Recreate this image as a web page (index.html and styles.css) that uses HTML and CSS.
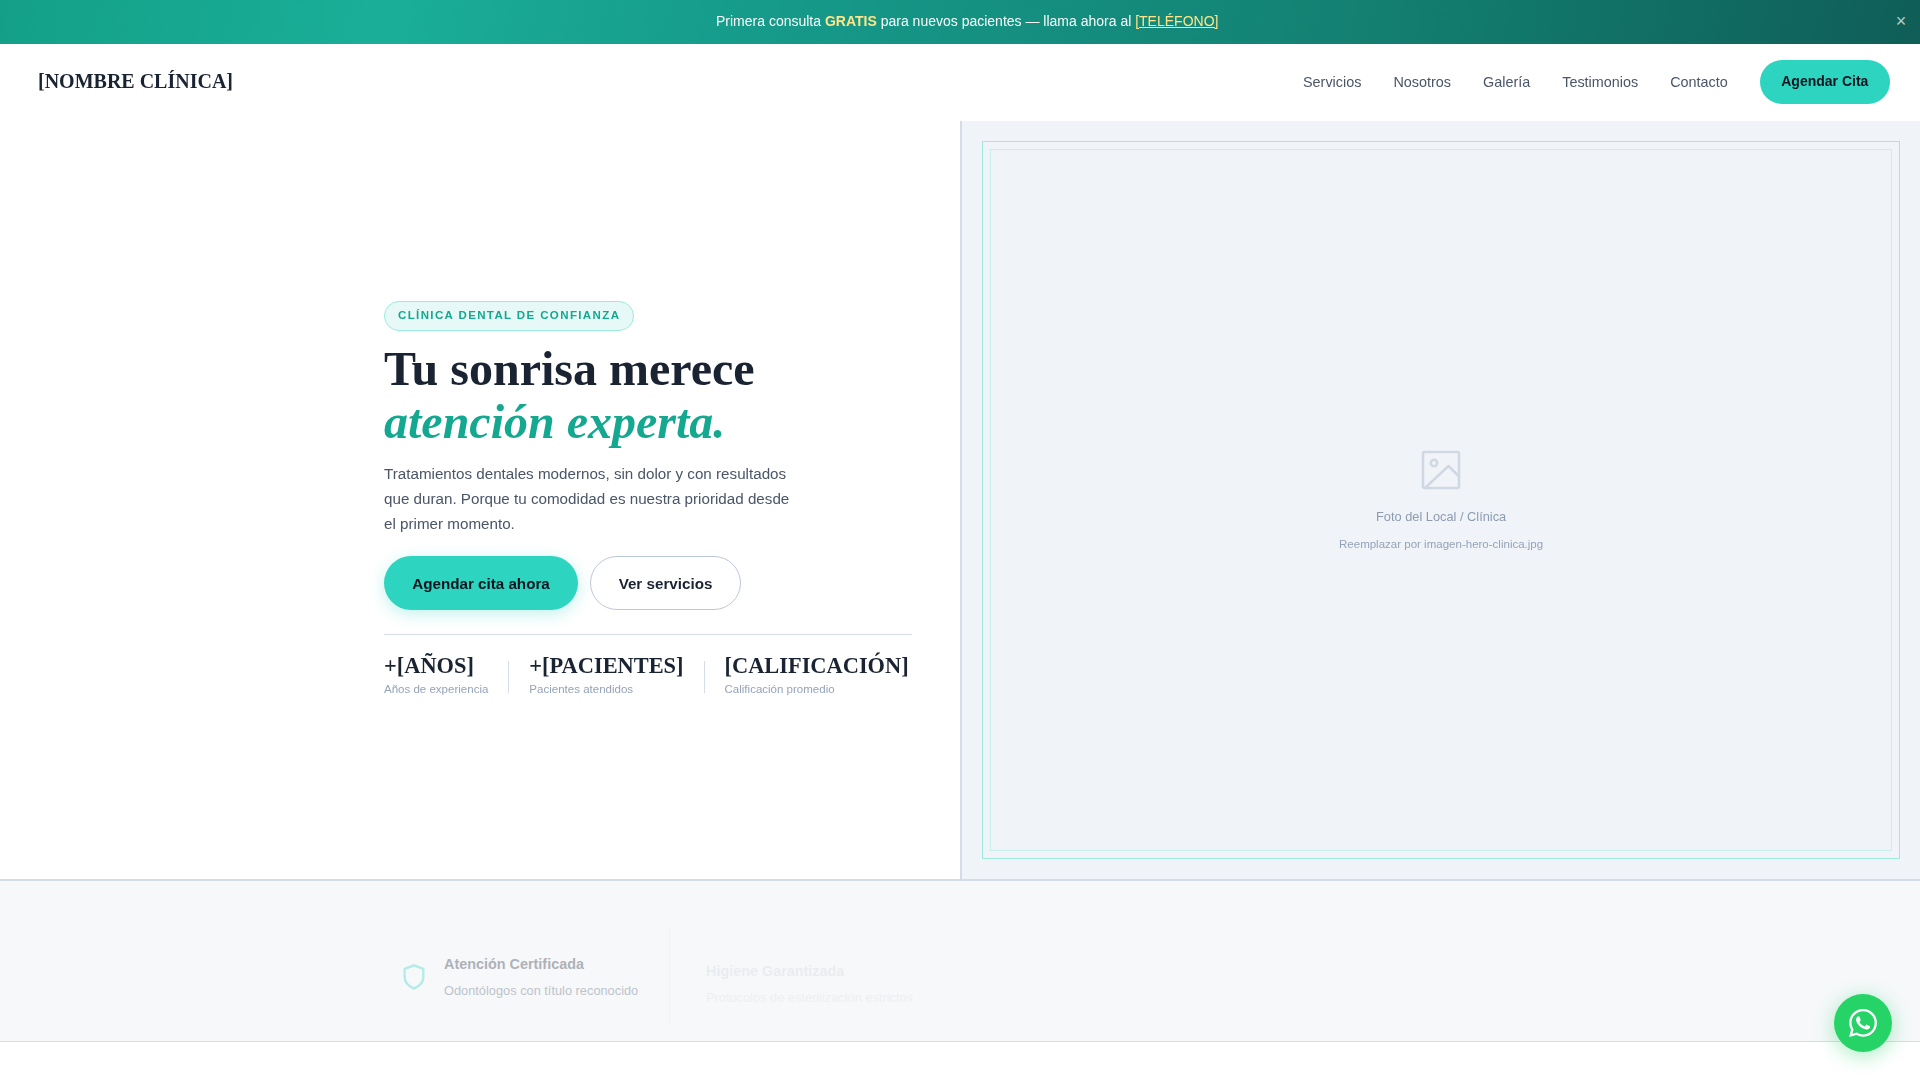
FILE: index.html
```html
<!DOCTYPE html>
<html lang="es">
<head>
<meta charset="utf-8">
<title>Clínica Dental</title>
<link rel="stylesheet" href="styles.css">
</head>
<body>
<div class="topbar">
  <p class="topbar-text soft">Primera consulta <strong>GRATIS</strong> para nuevos pacientes — llama ahora al <a href="#">[TELÉFONO]</a></p>
  <button class="topbar-close">×</button>
</div>
<header class="nav">
  <div class="logo soft">[NOMBRE CLÍNICA]</div>
  <nav class="nav-links soft">
    <a href="#">Servicios</a>
    <a href="#">Nosotros</a>
    <a href="#">Galería</a>
    <a href="#">Testimonios</a>
    <a href="#">Contacto</a>
    <a href="#" class="nav-cta">Agendar Cita</a>
  </nav>
</header>
<section class="hero">
  <div class="hero-left">
    <div class="hero-content soft">
      <span class="badge">CLÍNICA DENTAL DE CONFIANZA</span>
      <h1>Tu sonrisa merece <em>atención experta.</em></h1>
      <p class="lead">Tratamientos dentales modernos, sin dolor y con resultados que duran. Porque tu comodidad es nuestra prioridad desde el primer momento.</p>
      <div class="actions">
        <a href="#" class="btn btn-primary">Agendar cita ahora</a>
        <a href="#" class="btn btn-ghost">Ver servicios</a>
      </div>
      <div class="stats">
        <div class="stat"><strong>+[AÑOS]</strong><span>Años de experiencia</span></div>
        <div class="stat-div"></div>
        <div class="stat"><strong>+[PACIENTES]</strong><span>Pacientes atendidos</span></div>
        <div class="stat-div"></div>
        <div class="stat"><strong>[CALIFICACIÓN]</strong><span>Calificación promedio</span></div>
      </div>
    </div>
  </div>
  <div class="hero-right">
    <div class="frame"><div class="frame-inner">
      <div class="ph soft">
        <svg class="ph-icon" viewBox="0 0 40 40" fill="none" stroke="#d0d9e3" stroke-width="2.6" stroke-linejoin="round" stroke-linecap="round">
          <rect x="2" y="2" width="36" height="36" rx="1.5"/>
          <circle cx="13" cy="13" r="3.2"/>
          <path d="M4 38 L27.5 16 L38 26.5"/>
        </svg>
        <p class="ph-title">Foto del Local / Clínica</p>
        <p class="ph-sub">Reemplazar por imagen-hero-clinica.jpg</p>
      </div>
    </div></div>
  </div>
</section>
<section class="trust">
  <div class="trust-grid">
    <div class="trust-item first">
      <svg class="trust-icon" viewBox="0 0 24 24" fill="none" stroke="#2dd4bf" stroke-width="2" stroke-linejoin="round"><path d="M12 2 L20 5 V12 C20 16.5 16.5 20 12 22 C7.5 20 4 16.5 4 12 V5 Z"/></svg>
      <div><h3>Atención Certificada</h3><p>Odontólogos con título reconocido</p></div>
    </div>
    <div class="trust-item second">
      <div><h3>Higiene Garantizada</h3><p>Protocolos de esterilización estrictos</p></div>
    </div>
  </div>
</section>
<a href="#" class="wa" aria-label="WhatsApp">
  <svg viewBox="0 0 24 24" fill="#fff"><path d="M17.472 14.382c-.297-.149-1.758-.867-2.03-.967-.273-.099-.471-.148-.67.15-.197.297-.767.966-.94 1.164-.173.199-.347.223-.644.075-.297-.15-1.255-.463-2.39-1.475-.883-.788-1.48-1.761-1.653-2.059-.173-.297-.018-.458.13-.606.134-.133.298-.347.446-.52.149-.174.198-.298.298-.497.099-.198.05-.371-.025-.52-.075-.149-.669-1.612-.916-2.207-.242-.579-.487-.5-.669-.51-.173-.008-.371-.01-.57-.01-.198 0-.52.074-.792.372-.272.297-1.04 1.016-1.04 2.479 0 1.462 1.065 2.875 1.213 3.074.149.198 2.096 3.2 5.077 4.487.709.306 1.262.489 1.694.625.712.227 1.36.195 1.871.118.571-.085 1.758-.719 2.006-1.413.248-.694.248-1.289.173-1.413-.074-.124-.272-.198-.57-.347m-5.421 7.403h-.004a9.87 9.87 0 01-5.031-1.378l-.361-.214-3.741.982.998-3.648-.235-.374a9.86 9.86 0 01-1.51-5.26c.001-5.45 4.436-9.884 9.888-9.884 2.64 0 5.122 1.03 6.988 2.898a9.825 9.825 0 012.893 6.994c-.003 5.45-4.437 9.884-9.885 9.884m8.413-18.297A11.815 11.815 0 0012.05 0C5.495 0 .16 5.335.157 11.892c0 2.096.547 4.142 1.588 5.945L.057 24l6.305-1.654a11.882 11.882 0 005.683 1.448h.005c6.554 0 11.89-5.335 11.893-11.893a11.821 11.821 0 00-3.48-8.413z"/></svg>
</a>
</body>
</html>
```
FILE: styles.css
```css
* { box-sizing: border-box; }
html, body { margin: 0; padding: 0; }
body { background: #fff; font-family: "Liberation Sans", Arial, sans-serif; color: #1a2332; height: 1080px; overflow: hidden; }
a { color: inherit; text-decoration: none; }
h1, h3, p { margin: 0; }
.soft { will-change: transform; }

.topbar { position: relative; height: 44px; padding: 0 0 2px 14px; display: flex; align-items: center; justify-content: center; background: linear-gradient(100deg, #14a088 0%, #1aae98 20%, #169a8a 40%, #138173 70%, #0f5e58 100%); color: #fff; font-size: 14px; }
.topbar-text { color: #f6fbfa; }
.topbar-text strong { color: #fde68a; }
.topbar-text a { color: #fde68a; text-decoration: underline; }
.topbar-close { position: absolute; right: 12px; top: 10px; padding: 0; width: 14px; height: 22px; background: none; border: 0; color: rgba(255,255,255,.7); font: 18px/22px "Liberation Sans", sans-serif; }

.nav { height: 77px; padding: 0 30px 0 38px; display: flex; align-items: center; justify-content: space-between; background: #fff; }
.logo { font: 700 20px "Liberation Serif", serif; color: #1a2332; margin-bottom: 2px; }
.nav-links { display: flex; align-items: center; gap: 32px; height: 44px; margin-bottom: 2px; font-size: 14.4px; color: #4a5568; }
.nav-cta { width: 130px; height: 44px; padding-bottom: 3px; display: flex; align-items: center; justify-content: center; border-radius: 22px; background: #2dd4bf; color: #0d1520; font-size: 14px; font-weight: 700; }

.hero { display: grid; grid-template-columns: 960px 960px; height: 760px; border-bottom: 2px solid #d5dce8; }
.hero-left { display: flex; align-items: center; justify-content: flex-end; padding-right: 48px; }
.hero-content { width: 528px; }
.badge { display: block; width: fit-content; height: 30px; padding: 0 13px; border: 1px solid #99ebdd; border-radius: 15px; background: #e6f9f6; color: #14a890; font-size: 11.5px; font-weight: 700; letter-spacing: 1.38px; line-height: 26px; }
h1 { margin-top: 12px; font: 700 48px/52.8px "Liberation Serif", serif; color: #1a2332; }
h1 em { display: block; color: #14a890; }
.lead { margin-top: 12.16px; width: 416px; font-size: 15.2px; line-height: 25.08px; color: #4a5568; }
.actions { margin-top: 20px; display: flex; gap: 12px; }
.btn { height: 54px; padding-top: 1px; display: flex; align-items: center; justify-content: center; border-radius: 27px; font-size: 15.2px; font-weight: 700; }
.btn-primary { width: 194px; background: #2dd4bf; color: #0d1520; box-shadow: 0 4px 16px rgba(45,212,191,.3); }
.btn-ghost { width: 151px; border: 1px solid #bcc7d9; color: #1a2332; }
.stats { margin-top: 24px; padding-top: 18px; border-top: 1px solid #d5dce8; display: flex; gap: 20px; height: 65px; white-space: nowrap; }
.stat { display: flex; flex-direction: column; }
.stat-div { width: 1px; height: 32px; margin-top: 8px; background: #d5dce8; }
.stat strong { font: 700 22.4px/26px "Liberation Serif", serif; color: #1a2332; }
.stat span { margin-top: 3px; font-size: 11.52px; line-height: 14px; color: #95a3b8; }

.hero-right { border-left: 2px solid #d5dce8; background: #f0f4f8; padding: 20px; }
.frame { height: 100%; border: 1px solid #9eeadc; padding: 7px; }
.frame-inner { height: 100%; border: 1px solid #c9efe9; display: flex; align-items: center; justify-content: center; }
.ph { display: flex; flex-direction: column; align-items: center; }
.ph-icon { width: 40px; height: 40px; }
.ph-title { margin-top: 19px; font-size: 12.8px; line-height: 15px; color: #8c9bb0; }
.ph-sub { margin-top: 14px; font-size: 11.52px; line-height: 13px; color: #95a3b8; }

.trust { height: 161px; padding: 32px 0; background: #f6f8fa; border-bottom: 1px solid #d5dce8; }
.trust-grid { width: 1152px; height: 96px; margin: 0 auto; display: flex; }
.trust-item { display: flex; align-items: center; gap: 16px; height: 96px; }
.first { width: 286px; padding-left: 16px; border-right: 1px solid #e2e6ec; opacity: .33; transform: translateY(16px); }
.second { padding-left: 36px; opacity: .05; transform: translateY(23px); }
.trust-icon { width: 28px; height: 28px; flex: none; }
.trust-item h3 { font-size: 14.4px; line-height: 18px; color: #1a2332; }
.trust-item p { margin-top: 9px; font-size: 12.8px; line-height: 18px; color: #4a5568; }

.wa { position: fixed; right: 28px; bottom: 28px; width: 58px; height: 58px; border-radius: 50%; background: #25d366; display: flex; align-items: center; justify-content: center; box-shadow: 0 4px 20px rgba(37,211,102,.4); }
.wa svg { width: 28px; height: 28px; }
```
